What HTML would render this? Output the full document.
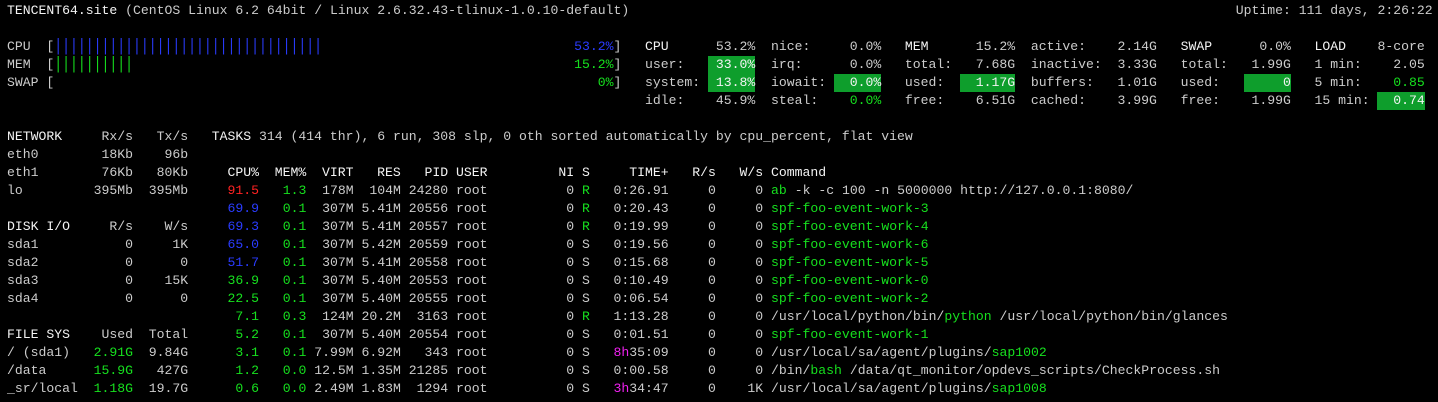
<!DOCTYPE html>
<html><head><meta charset="utf-8">
<style>
html,body{margin:0;padding:0;background:#000;}
body{width:1438px;height:402px;overflow:hidden;position:relative;font-family:"Liberation Mono","DejaVu Sans Mono",monospace;font-size:13.13px;color:#cccccc;}
.ln{position:absolute;left:0;height:18px;line-height:18px;width:1438px;}
.ln span.s{position:absolute;top:0;white-space:pre;}
.w{color:#f4f4f4}
.g{color:#16e01e}
.b{color:#2a3cff}
.r{color:#ff2222}
.m{color:#f020f0}
.bar{display:inline-block;transform:scaleY(1.35);}
.h{background:#0e9e2c;color:#f4f4f4;display:inline-block;height:18px;}
.c0{left:7px}.c26{left:calc(7px + 26ch)}.c28{left:calc(7px + 28ch)}
.c72{left:calc(7px + 72ch)}.c75{left:calc(7px + 75ch)}.c77{left:calc(7px + 77ch)}
.c81{left:calc(7px + 81ch)}.c97{left:calc(7px + 97ch)}.c114{left:calc(7px + 114ch)}
.c130{left:calc(7px + 130ch)}.c149{left:calc(7px + 149ch)}.c166{left:calc(7px + 166ch)}
.c156{left:calc(7px + 156ch)}
</style></head><body>
<div class="ln" style="top:2px"><span class="s c0"><span class="w">TENCENT64.site</span> (CentOS Linux 6.2 64bit / Linux 2.6.32.43-tlinux-1.0.10-default)</span><span class="s c156">Uptime: 111 days, 2:26:22</span></div>

<div class="ln" style="top:38px"><span class="s c0">CPU  [<span class="b bar">||||||||||||||||||||||||||||||||||</span></span><span class="s c72 b">53.2%</span><span class="s c77">]</span><span class="s c81"><span class="w">CPU</span>      53.2%</span><span class="s c97">nice:     0.0%</span><span class="s c114"><span class="w">MEM</span>      15.2%</span><span class="s c130">active:    2.14G</span><span class="s c149"><span class="w">SWAP</span>      0.0%</span><span class="s c166"><span class="w">LOAD</span>    8-core</span></div>

<div class="ln" style="top:56px"><span class="s c0">MEM  [<span class="g bar">||||||||||</span></span><span class="s c72 g">15.2%</span><span class="s c77">]</span><span class="s c81">user:   <span class="h"> 33.0%</span></span><span class="s c97">irq:      0.0%</span><span class="s c114">total:   7.68G</span><span class="s c130">inactive:  3.33G</span><span class="s c149">total:   1.99G</span><span class="s c166">1 min:    2.05</span></div>

<div class="ln" style="top:74px"><span class="s c0">SWAP [</span><span class="s c75 g">0%</span><span class="s c77">]</span><span class="s c81">system: <span class="h"> 13.8%</span></span><span class="s c97">iowait: <span class="h">  0.0%</span></span><span class="s c114">used:  <span class="h">  1.17G</span></span><span class="s c130">buffers:   1.01G</span><span class="s c149">used:   <span class="h">     0</span></span><span class="s c166">5 min:    <span class="g">0.85</span></span></div>

<div class="ln" style="top:92px"><span class="s c81">idle:    45.9%</span><span class="s c97">steal:    <span class="g">0.0%</span></span><span class="s c114">free:    6.51G</span><span class="s c130">cached:    3.99G</span><span class="s c149">free:    1.99G</span><span class="s c166">15 min: <span class="h">  0.74</span></span></div>

<div class="ln" style="top:128px"><span class="s c0"><span class="w">NETWORK</span>     Rx/s   Tx/s</span><span class="s c26"><span class="w">TASKS</span> 314 (414 thr), 6 run, 308 slp, 0 oth sorted automatically by cpu_percent, flat view</span></div>

<div class="ln" style="top:146px"><span class="s c0">eth0        18Kb    96b</span></div>

<div class="ln" style="top:164px"><span class="s c0">eth1        76Kb   80Kb</span><span class="s c28 w">CPU%  MEM%  VIRT   RES   PID USER         NI S     TIME+   R/s   W/s Command</span></div>

<div class="ln" style="top:182px"><span class="s c0">lo         395Mb  395Mb</span><span class="s c28"><span class="r">91.5</span>   <span class="g">1.3</span>  178M  104M 24280 root          0 <span class="g">R</span>   0:26.91     0     0 <span class="g">ab</span> -k -c 100 -n 5000000 http://127.0.0.1:8080/</span></div>

<div class="ln" style="top:200px"><span class="s c28"><span class="b">69.9</span>   <span class="g">0.1</span>  307M 5.41M 20556 root          0 <span class="g">R</span>   0:20.43     0     0 <span class="g">spf-foo-event-work-3</span></span></div>

<div class="ln" style="top:218px"><span class="s c0"><span class="w">DISK I/O</span>     R/s    W/s</span><span class="s c28"><span class="b">69.3</span>   <span class="g">0.1</span>  307M 5.41M 20557 root          0 <span class="g">R</span>   0:19.99     0     0 <span class="g">spf-foo-event-work-4</span></span></div>

<div class="ln" style="top:236px"><span class="s c0">sda1           0     1K</span><span class="s c28"><span class="b">65.0</span>   <span class="g">0.1</span>  307M 5.42M 20559 root          0 S   0:19.56     0     0 <span class="g">spf-foo-event-work-6</span></span></div>

<div class="ln" style="top:254px"><span class="s c0">sda2           0      0</span><span class="s c28"><span class="b">51.7</span>   <span class="g">0.1</span>  307M 5.41M 20558 root          0 S   0:15.68     0     0 <span class="g">spf-foo-event-work-5</span></span></div>

<div class="ln" style="top:272px"><span class="s c0">sda3           0    15K</span><span class="s c28"><span class="g">36.9</span>   <span class="g">0.1</span>  307M 5.40M 20553 root          0 S   0:10.49     0     0 <span class="g">spf-foo-event-work-0</span></span></div>

<div class="ln" style="top:290px"><span class="s c0">sda4           0      0</span><span class="s c28"><span class="g">22.5</span>   <span class="g">0.1</span>  307M 5.40M 20555 root          0 S   0:06.54     0     0 <span class="g">spf-foo-event-work-2</span></span></div>

<div class="ln" style="top:308px"><span class="s c28"><span class="g"> 7.1</span>   <span class="g">0.3</span>  124M 20.2M  3163 root          0 <span class="g">R</span>   1:13.28     0     0 /usr/local/python/bin/<span class="g">python</span> /usr/local/python/bin/glances</span></div>

<div class="ln" style="top:326px"><span class="s c0"><span class="w">FILE SYS</span>    Used  Total</span><span class="s c28"><span class="g"> 5.2</span>   <span class="g">0.1</span>  307M 5.40M 20554 root          0 S   0:01.51     0     0 <span class="g">spf-foo-event-work-1</span></span></div>

<div class="ln" style="top:344px"><span class="s c0">/ (sda1)   <span class="g">2.91G</span>  9.84G</span><span class="s c28"><span class="g"> 3.1</span>   <span class="g">0.1</span> 7.99M 6.92M   343 root          0 S   <span class="m">8h</span>35:09     0     0 /usr/local/sa/agent/plugins/<span class="g">sap1002</span></span></div>

<div class="ln" style="top:362px"><span class="s c0">/data      <span class="g">15.9G</span>   427G</span><span class="s c28"><span class="g"> 1.2</span>   <span class="g">0.0</span> 12.5M 1.35M 21285 root          0 S   0:00.58     0     0 /bin/<span class="g">bash</span> /data/qt_monitor/opdevs_scripts/CheckProcess.sh</span></div>

<div class="ln" style="top:380px"><span class="s c0">_sr/local  <span class="g">1.18G</span>  19.7G</span><span class="s c28"><span class="g"> 0.6</span>   <span class="g">0.0</span> 2.49M 1.83M  1294 root          0 S   <span class="m">3h</span>34:47     0    1K /usr/local/sa/agent/plugins/<span class="g">sap1008</span></span></div>
</body></html>
